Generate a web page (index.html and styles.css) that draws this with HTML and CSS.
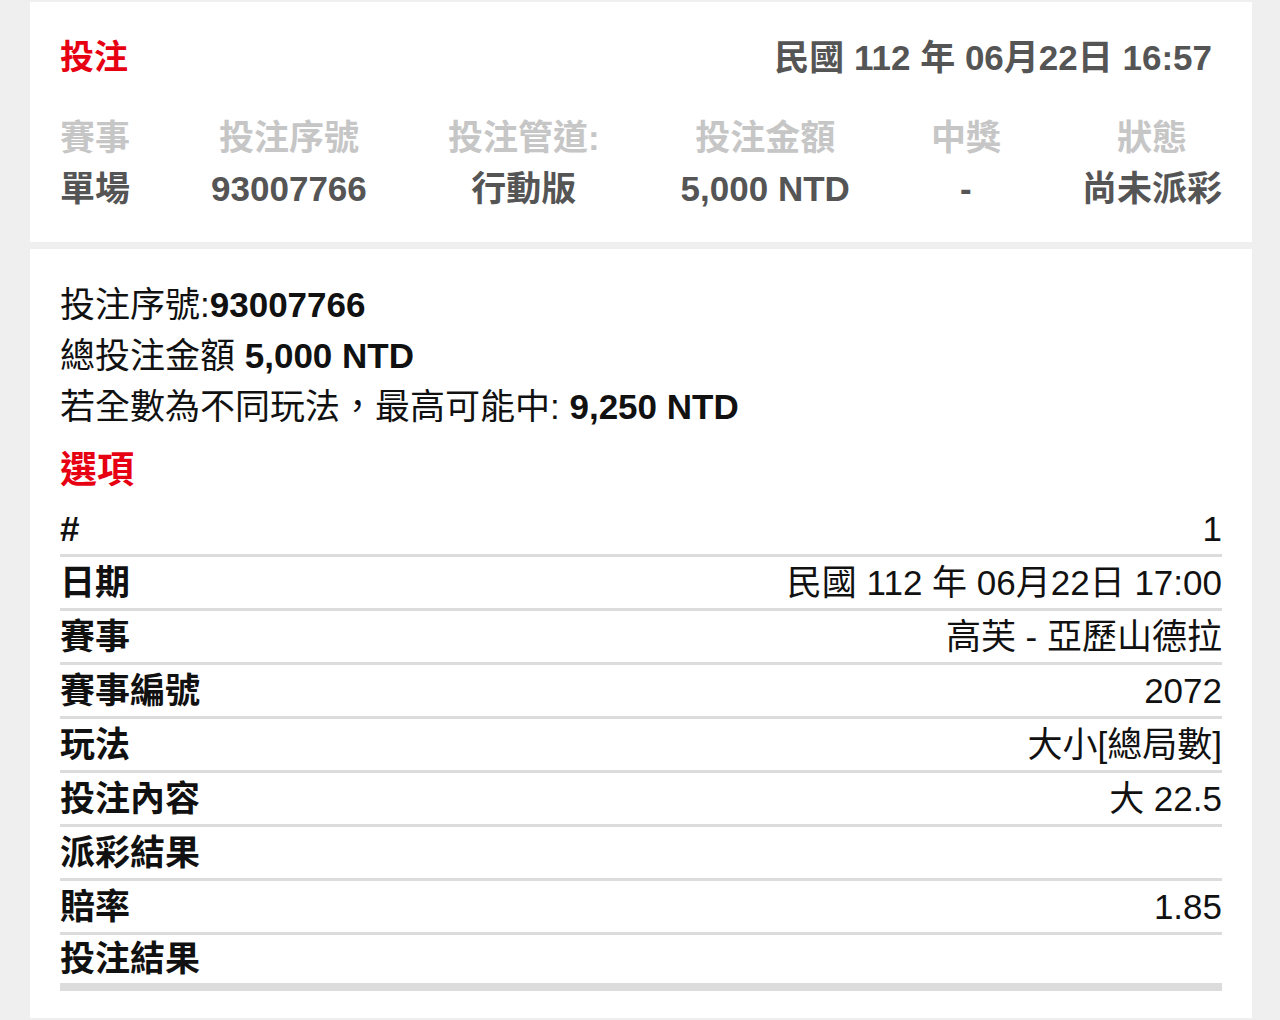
FILE: index.html
```html
<!DOCTYPE html>
<html lang="zh-Hant">

<head>
    <meta charset="UTF-8">
    <meta name="viewport" content="width=device-width, initial-scale=1.0">
    <title>投注紀錄</title>
    <link rel="stylesheet" href="styles.css">
</head>

<body>
    <!-- 投注摘要 -->
    <div class="card summary">
        <div class="summary-head">
            <div class="title">投注</div>
            <div class="bet-time">民國 112 年 06月22日 16:57</div>
        </div>
        <div class="summary-cols">
            <div class="col">
                <div class="col-label">賽事</div>
                <div class="col-value">單場</div>
            </div>
            <div class="col">
                <div class="col-label">投注序號</div>
                <div class="col-value">93007766</div>
            </div>
            <div class="col">
                <div class="col-label">投注管道:</div>
                <div class="col-value">行動版</div>
            </div>
            <div class="col">
                <div class="col-label">投注金額</div>
                <div class="col-value">5,000 NTD</div>
            </div>
            <div class="col">
                <div class="col-label">中獎</div>
                <div class="col-value">-</div>
            </div>
            <div class="col">
                <div class="col-label">狀態</div>
                <div class="col-value">尚未派彩</div>
            </div>
        </div>
    </div>

    <!-- 投注明細 -->
    <div class="card detail">
        <div class="info-line">投注序號:<b>93007766</b></div>
        <div class="info-line">總投注金額 <b>5,000 NTD</b></div>
        <div class="info-line">若全數為不同玩法，最高可能中: <b>9,250 NTD</b></div>
        <div class="section-title">選項</div>

        <table class="options">
            <tr><th>#</th><td>1</td></tr>
            <tr><th>日期</th><td>民國 112 年 06月22日 17:00</td></tr>
            <tr><th>賽事</th><td>高芙 - 亞歷山德拉</td></tr>
            <tr><th>賽事編號</th><td>2072</td></tr>
            <tr><th>玩法</th><td>大小[總局數]</td></tr>
            <tr><th>投注內容</th><td>大 22.5</td></tr>
            <tr><th>派彩結果</th><td></td></tr>
            <tr><th>賠率</th><td>1.85</td></tr>
            <tr class="last"><th>投注結果</th><td></td></tr>
        </table>
    </div>
</body>

</html>
```

FILE: styles.css
```css
body {
    margin: 0;
    padding: 2px 28px 0 30px;
    background-color: #efefef;
    font-family: "Liberation Sans", Arial, "Noto Sans CJK TC", sans-serif;
    font-size: 35px;
    color: #111;
}

.card {
    background: #fff;
    padding: 0 30px;
}

.summary {
    padding-top: 30px;
    padding-bottom: 28px;
}

.summary-head {
    display: flex;
    justify-content: space-between;
    align-items: center;
    line-height: 51px;
    margin-bottom: 29px;
}

.title {
    color: #e60012;
    font-weight: bold;
    font-size: 34px;
}

.bet-time {
    color: #555;
    font-weight: bold;
    margin-right: 10px;
}

.summary-cols {
    display: flex;
    justify-content: space-between;
}

.col {
    text-align: center;
    font-weight: bold;
    line-height: 51px;
}

.col-label {
    color: #c6c6c6;
}

.col-value {
    color: #555;
}

.detail {
    margin-top: 7px;
    padding-top: 30px;
    padding-bottom: 27px;
}

.info-line {
    line-height: 51px;
    color: #111;
}

.section-title {
    margin-top: 13px;
    color: #e60012;
    font-weight: bold;
    font-size: 37px;
    line-height: 51px;
}

.options {
    width: 100%;
    margin-top: 7px;
    border-collapse: collapse;
}

.options th,
.options td {
    padding: 0;
    height: 51px;
    line-height: 51px;
    border-bottom: 3px solid #dcdcdc;
    white-space: nowrap;
}

.options th {
    text-align: left;
    font-weight: bold;
}

.options td {
    text-align: right;
}

.options tr.last th,
.options tr.last td {
    height: 48px;
    line-height: 48px;
    border-bottom: 8px solid #dcdcdc;
}
```
